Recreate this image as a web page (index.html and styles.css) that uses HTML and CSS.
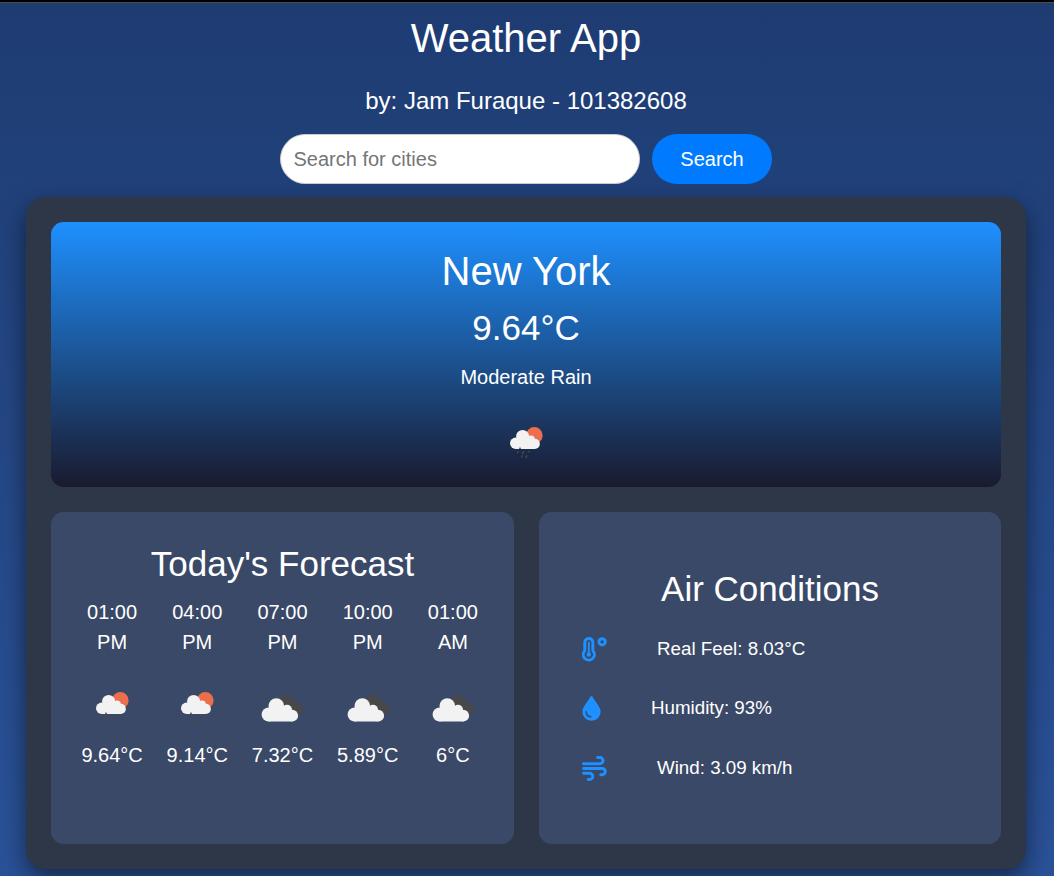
FILE: index.html
```html
<!DOCTYPE html>
<html lang="en">
<head>
<meta charset="utf-8">
<title>Weather App</title>
<link rel="stylesheet" href="styles.css">
</head>
<body>
<svg class="defs" width="0" height="0">
  <symbol id="rain" viewBox="0 0 62 62">
    <circle cx="39.300" cy="23.400" r="8.300" fill="#ec6e4c"/>
    <g fill="#f2f2f2"><circle cx="20.700" cy="31.300" r="5.700"/><circle cx="27.600" cy="24.400" r="6.500"/><circle cx="36" cy="27.400" r="3.900"/><circle cx="39.800" cy="31.900" r="5.100"/><path d="M20.700 26h13l6.100 3v8H20.700z"/></g>
    <path stroke="#484848" stroke-width="1.400" stroke-linecap="round" d="M23.100 39.600l-.6 1.200M28.500 39.700l-1 1.800M34.300 39.200l-.5 1M27.200 43.800l-.5 1M31.800 43.800l-.9 1.800"/>
    <circle cx="25" cy="36.300" r=".8" fill="#222"/>
  </symbol>
  <symbol id="clouds" viewBox="0 0 62 62">
    <g fill="#484848"><circle cx="35.400" cy="24" r="6.300"/><circle cx="42.300" cy="28.300" r="5.200"/><circle cx="47.700" cy="32.500" r="4.700"/><path d="M33 25h13v12.200h1.700L36 34z"/></g>
    <g fill="#f2f2f2"><circle cx="17.700" cy="37.500" r="7.100"/><circle cx="25.300" cy="29.100" r="7.800"/><circle cx="36" cy="32.800" r="5"/><circle cx="41.200" cy="38.700" r="5.900"/><path d="M17.400 31h16l8 4v9.600h-24z"/></g>
  </symbol>
</svg>
<div class="app">
  <h1 class="title">Weather App</h1>
  <p class="author">by: Jam Furaque - 101382608</p>
  <form class="search">
    <input class="search-input" type="text" placeholder="Search for cities">
    <button class="search-button" type="button">Search</button>
  </form>
  <main class="board">
    <section class="current">
      <h2 class="city">New York</h2>
      <p class="temperature">9.64°C</p>
      <p class="condition">Moderate Rain</p>
      <svg class="weather-icon"><use href="#rain"/></svg>
    </section>
    <div class="panels">
      <section class="panel forecast">
        <h2 class="heading">Today's Forecast</h2>
        <div class="hours">
          <div class="hour"><p class="time">01:00 PM</p><svg class="weather-icon"><use href="#rain"/></svg><p>9.64°C</p></div>
          <div class="hour"><p class="time">04:00 PM</p><svg class="weather-icon"><use href="#rain"/></svg><p>9.14°C</p></div>
          <div class="hour"><p class="time">07:00 PM</p><svg class="weather-icon"><use href="#clouds"/></svg><p>7.32°C</p></div>
          <div class="hour"><p class="time">10:00 PM</p><svg class="weather-icon"><use href="#clouds"/></svg><p>5.89°C</p></div>
          <div class="hour"><p class="time">01:00 AM</p><svg class="weather-icon"><use href="#clouds"/></svg><p>6°C</p></div>
        </div>
      </section>
      <section class="panel air">
        <h2 class="heading">Air Conditions</h2>
        <div class="condition-row">
          <svg class="air-icon" viewBox="0 0 26 26" fill="none" stroke="currentColor"><path stroke-width="3.100" d="M2.900 5.700a4.200 4.200 0 0 1 8.400 0v8.500a5.800 5.800 0 1 1-8.400 0z"/><path stroke-width="2" stroke-linecap="round" d="M7.100 6v12"/><circle cx="7.100" cy="18.200" r="2.400" fill="currentColor" stroke="none"/><circle cx="20.900" cy="5" r="3.300" stroke-width="3.100"/></svg>
          <span>Real Feel: 8.03°C</span>
        </div>
        <div class="condition-row">
          <svg class="air-icon drop" viewBox="0 0 19 26"><path fill="currentColor" d="M8.200 1c.6-1.300 2-1.300 2.600 0C13 5.600 19 11.300 19 16.300a9.500 9.500 0 0 1-19 0C0 11.300 5.900 5.600 8.200 1z"/><path fill="none" stroke="#3a4967" stroke-width="1.600" stroke-linecap="round" d="M4 16.500a5.300 5.300 0 0 0 4.800 5.100"/></svg>
          <span>Humidity: 93%</span>
        </div>
        <div class="condition-row">
          <svg class="air-icon" viewBox="0 0 26 26" fill="none" stroke="currentColor" stroke-width="3.100" stroke-linecap="round"><path d="M1.600 8h17.100a3.200 3.200 0 1 0 0-6.400h-2.500M1.600 13h19.400a3.200 3.200 0 1 1 0 6.400h-1.500M1.600 18h6.400a3.200 3.200 0 1 1 0 6.400H6.500"/></svg>
          <span>Wind: 3.09 km/h</span>
        </div>
      </section>
    </div>
  </main>
</div>
</body>
</html>
```
FILE: styles.css
```css
* { box-sizing: border-box; }
h1, h2, p { margin: 0; font-weight: 400; }
body {
  margin: 0;
  height: 876px;
  overflow: hidden;
  border-top: 2px solid #000;
  background: linear-gradient(#1e3c72, #2a5298) no-repeat;
  color: #fff;
  font-family: Arial, "Liberation Sans", sans-serif;
  text-align: center;
}
.defs { display: block; }
.app { border-top: 1px solid #4c4c4c; }
.title { padding-top: 11px; font-size: 40px; line-height: 48px; padding-right: 2px; }
.author { padding-right: 2px; margin-top: 24px; font-size: 24px; line-height: 30px; }
.search { display: flex; justify-content: center; gap: 12px; margin: 18px 2px 13px 0; }
.search-input {
  width: 360px;
  height: 50px;
  padding: 0 12.5px;
  border: 1px solid #ccc;
  border-radius: 25px;
  background: #fff;
  font: 20px Arial, "Liberation Sans", sans-serif;
}
.search-input::placeholder { color: #757575; }
.search-button {
  width: 120px;
  height: 50px;
  border: 0;
  border-radius: 25px;
  background: #007bff;
  color: #fff;
  font: 20px Arial, "Liberation Sans", sans-serif;
}
.board {
  width: 1000px;
  height: 672px;
  margin-left: 26px;
  padding: 25px;
  border-radius: 20px;
  background: #2d3748;
  box-shadow: 0 10px 25px rgba(0, 0, 0, .5);
}
.current {
  display: flex;
  flex-direction: column;
  align-items: center;
  height: 265px;
  padding-top: 25px;
  border-radius: 12.5px;
  background: linear-gradient(#1e90ff, #1a1a2e);
}
.city { font-size: 40px; line-height: 48px; }
.temperature { margin-top: 12px; font-size: 35px; line-height: 42px; }
.condition { margin-top: 13px; font-size: 20px; line-height: 30px; }
.weather-icon { display: block; width: 62px; height: 62px; }
.current .weather-icon { margin-top: 20px; }
.panels { display: grid; grid-template-columns: 463px 462px; gap: 25px; margin-top: 25px; }
.panel { height: 332px; border-radius: 12.5px; background: #3a4967; }
.heading { font-size: 35px; line-height: 42px; }
.forecast { padding: 31px 18.5px; }
.hours { display: grid; grid-template-columns: repeat(5, 1fr); margin-top: 12px; font-size: 20px; line-height: 30px; }
.hour { display: flex; flex-direction: column; align-items: center; }
.time { width: 60px; }
.hour .weather-icon { margin: 20px 0 1px; }
.air { padding: 56px 42px 0; }
.condition-row { display: flex; align-items: center; gap: 50px; height: 59.5px; padding-left: 1px; font-size: 18.75px; }
.air .heading { margin-bottom: 9px; }
.air-icon { width: 25px; height: 25px; margin-top: 1px; color: #1e90ff; }
.drop { width: 19px; }
```
